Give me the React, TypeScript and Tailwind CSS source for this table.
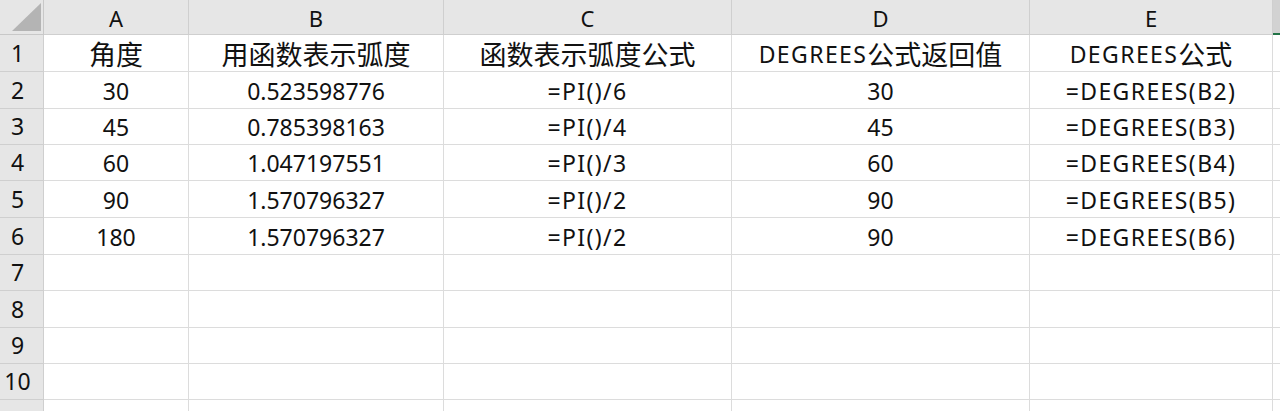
import React from "react";

const cols = ["A", "B", "C", "D", "E"];

const rows: string[][] = [
  ["角度", "用函数表示弧度", "函数表示弧度公式", "DEGREES公式返回值", "DEGREES公式"],
  ["30", "0.523598776", "=PI()/6", "30", "=DEGREES(B2)"],
  ["45", "0.785398163", "=PI()/4", "45", "=DEGREES(B3)"],
  ["60", "1.047197551", "=PI()/3", "60", "=DEGREES(B4)"],
  ["90", "1.570796327", "=PI()/2", "90", "=DEGREES(B5)"],
  ["180", "1.570796327", "=PI()/2", "90", "=DEGREES(B6)"],
  ["", "", "", "", ""],
  ["", "", "", "", ""],
  ["", "", "", "", ""],
  ["", "", "", "", ""],
  ["", "", "", "", ""],
];

const font = { fontFamily: '"Noto Sans", "Noto Sans CJK SC", sans-serif' };

// chinese runs are drawn a bit bigger, formula letters a bit wider, like the sheet font
function Cell({ v }: { v: string }) {
  const parts = v.split(/([\u4e00-\u9fff]+)/).filter(Boolean);
  return (
    <>
      {parts.map((p, k) =>
        /[\u4e00-\u9fff]/.test(p) ? (
          <span key={k} className="text-[27px]">
            {p}
          </span>
        ) : /[A-Z=()]/.test(p) ? (
          <span key={k} className="tracking-[1.4px]">
            {p}
          </span>
        ) : (
          <span key={k}>{p}</span>
        )
      )}
    </>
  );
}

export default function App() {
  return (
    <div
      className="w-[1280px] h-[411px] overflow-hidden bg-white text-[#111]"
      style={font}
    >
      <div className="grid grid-cols-[44px_145px_255px_288px_298px_243px_7px] grid-rows-[35px_37px_37px_36px_36px_37px_37px_36px_37px_36px_36px_37px]">
        {/* header row */}
        <div className="bg-[#e6e6e6] border-r border-b border-[#c8c8c8] flex items-end justify-end pr-[2px] pb-[3px]">
          <svg width="29" height="28" viewBox="0 0 29 28">
            <polygon points="29,0 29,28 0,28" fill="#b4b4b4" />
          </svg>
        </div>
        {cols.map((c) => (
          <div
            key={c}
            className="bg-[#e6e6e6] border-r border-b border-[#cfcfcf] flex items-center justify-center text-[22px] leading-none pt-[1px]"
          >
            {c}
          </div>
        ))}
        <div className="bg-[#d2d2d2] border-b-2 border-[#217346]" />

        {rows.map((r, i) => (
          <React.Fragment key={i}>
            <div className="bg-[#e6e6e6] border-r border-b border-[#cfcfcf] flex items-center justify-center pr-[8px] text-[23px] leading-none">
              {i < 10 ? i + 1 : ""}
            </div>
            {r.map((v, j) => (
              <div
                key={j}
                className="border-r border-b border-[#dcdcdc] flex items-center justify-center text-[23px] leading-none whitespace-nowrap pt-[2px]"
              >
                <Cell v={v} />
              </div>
            ))}
            <div className="border-b border-[#dcdcdc]" />
          </React.Fragment>
        ))}
      </div>
    </div>
  );
}
